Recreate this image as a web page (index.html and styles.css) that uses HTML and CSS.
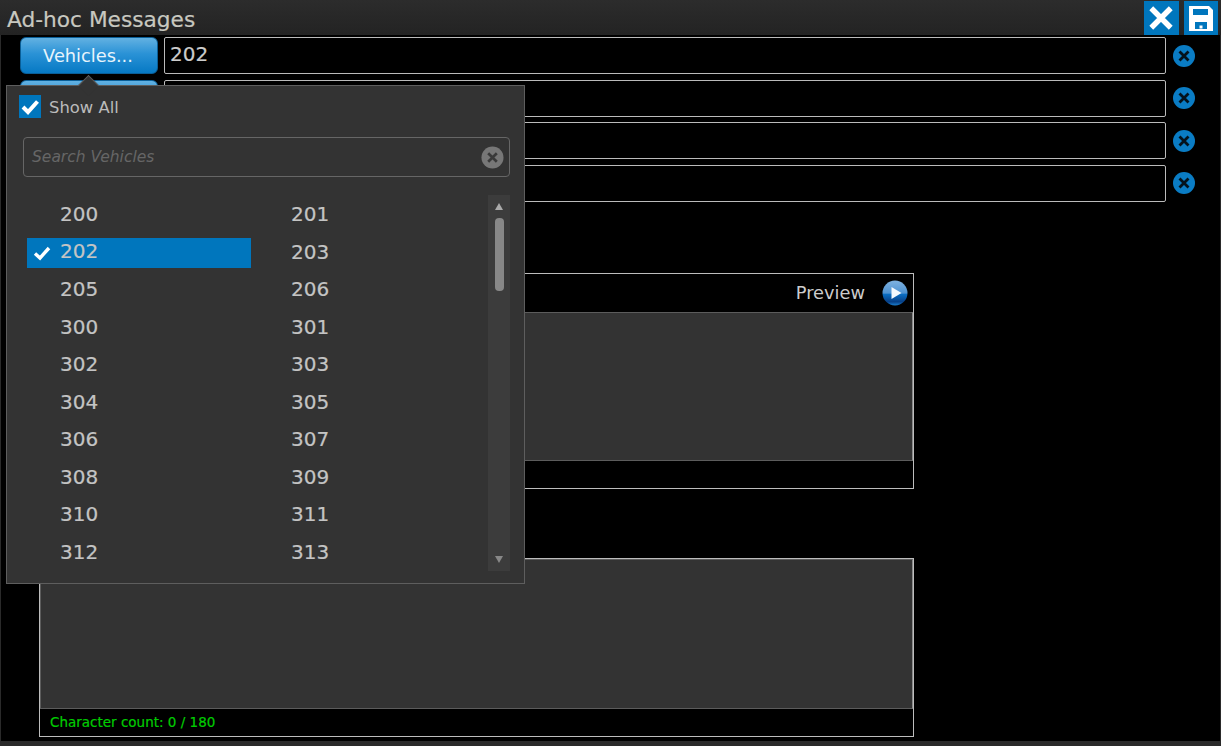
FILE: index.html
```html
<!DOCTYPE html>
<html lang="en">
<head>
<meta charset="utf-8">
<title>Ad-hoc Messages</title>
<link rel="stylesheet" href="styles.css">
</head>
<body>
<div class="window">
  <header class="titlebar">
    <h1 class="title">Ad-hoc Messages</h1>
    <div class="actions">
      <button class="action" aria-label="Close"><svg viewBox="0 0 24 24" width="26" height="26"><path d="M3 3 L21 21 M21 3 L3 21" stroke="#fff" stroke-width="5" fill="none"/></svg></button>
      <button class="action" aria-label="Save"><svg viewBox="0 0 24 25" width="24" height="25"><path fill="#fff" fill-rule="evenodd" d="M0 0 H20 L24 4 V25 H0 Z M4 3 V9 H19 V3 Z M6 16 V23 H18 V16 Z"/><rect x="10.5" y="19.5" width="3" height="3" fill="#fff"/></svg></button>
    </div>
  </header>
  <main class="content">
    <section class="rows">
      <div class="row"><button class="pick">Vehicles...</button><div class="field">202</div><span class="clear"><svg viewBox="0 0 24 24" width="24" height="24"><circle cx="12" cy="12" r="11" fill="#0a7cc4"/><path d="M7.5 7.5 L16.5 16.5 M16.5 7.5 L7.5 16.5" stroke="#04121c" stroke-width="2.8"/></svg></span></div>
      <div class="row"><button class="pick"></button><div class="field"></div><span class="clear"><svg viewBox="0 0 24 24" width="24" height="24"><circle cx="12" cy="12" r="11" fill="#0a7cc4"/><path d="M7.5 7.5 L16.5 16.5 M16.5 7.5 L7.5 16.5" stroke="#04121c" stroke-width="2.8"/></svg></span></div>
      <div class="row"><button class="pick"></button><div class="field"></div><span class="clear"><svg viewBox="0 0 24 24" width="24" height="24"><circle cx="12" cy="12" r="11" fill="#0a7cc4"/><path d="M7.5 7.5 L16.5 16.5 M16.5 7.5 L7.5 16.5" stroke="#04121c" stroke-width="2.8"/></svg></span></div>
      <div class="row"><button class="pick"></button><div class="field"></div><span class="clear"><svg viewBox="0 0 24 24" width="24" height="24"><circle cx="12" cy="12" r="11" fill="#0a7cc4"/><path d="M7.5 7.5 L16.5 16.5 M16.5 7.5 L7.5 16.5" stroke="#04121c" stroke-width="2.8"/></svg></span></div>
    </section>
    <section class="panel panel-first">
      <div class="panel-head">
        <span class="preview">Preview</span>
        <svg class="play" viewBox="0 0 26 26" width="26" height="26"><defs><linearGradient id="pg" x1="0" y1="0" x2="0" y2="1"><stop offset="0" stop-color="#7fb2e0"/><stop offset=".5" stop-color="#4f93d2"/><stop offset=".56" stop-color="#0a6cc0"/><stop offset=".85" stop-color="#073f86"/><stop offset="1" stop-color="#1a7fd0"/></linearGradient></defs><circle cx="13" cy="13" r="12.5" fill="url(#pg)"/><path d="M9.5 7 L19.5 13 L9.5 19 Z" fill="#f4f9fd"/></svg>
      </div>
      <div class="panel-body"></div>
      <div class="panel-foot"></div>
    </section>
    <section class="panel panel-second">
      <div class="panel-body"></div>
      <div class="panel-foot count">Character count: 0 / 180</div>
    </section>
  </main>

  <div class="popover">
    <label class="show-all"><span class="check"><svg viewBox="0 0 22 23" width="22" height="23"><path d="M4 12 L9 17 L18.5 6.5" stroke="#fff" stroke-width="4" fill="none"/></svg></span><span class="show-label">Show All</span></label>
    <div class="search"><span class="placeholder">Search Vehicles</span><svg viewBox="0 0 24 24" width="23" height="23"><circle cx="12" cy="12" r="11.5" fill="#777"/><path d="M7.5 7.5 L16.5 16.5 M16.5 7.5 L7.5 16.5" stroke="#3a3a3a" stroke-width="2.8"/></svg></div>
    <div class="listwrap">
      <ul class="list">
        <li>200</li><li>201</li>
        <li class="selected"><svg class="tick" viewBox="0 0 18 16" width="18" height="16"><path d="M2 8.5 L7 13 L16 3" stroke="#fff" stroke-width="3.4" fill="none"/></svg>202</li><li>203</li>
        <li>205</li><li>206</li>
        <li>300</li><li>301</li>
        <li>302</li><li>303</li>
        <li>304</li><li>305</li>
        <li>306</li><li>307</li>
        <li>308</li><li>309</li>
        <li>310</li><li>311</li>
        <li>312</li><li>313</li>
      </ul>
      <div class="scrollbar">
        <span class="arrow up"></span>
        <span class="thumb"></span>
        <span class="arrow down"></span>
      </div>
    </div>
  </div>
</div>
</body>
</html>
```

FILE: styles.css
```css
* { box-sizing: border-box; }
html, body { margin: 0; height: 100%; background: #000; overflow: hidden; }
body { font-family: "DejaVu Sans", Verdana, sans-serif; color: #ccc; }

.window {
  position: relative;
  width: 1221px;
  height: 746px;
  background: #000;
  border-left: 1px solid #2a2a2a;
  border-right: 1px solid #2a2a2a;
  border-bottom: 5px solid #2a2a2a;
  display: flex;
  flex-direction: column;
}

.titlebar {
  height: 35px;
  flex: none;
  background: linear-gradient(#2c2c2c, #232323);
  display: flex;
  justify-content: space-between;
  padding: 1px 3px 0 7px;
  margin: 0 -1px;
}
.title { margin: 0; font-size: 21.7px; font-weight: 400; line-height: 38px; color: #c8c8c0; -webkit-text-stroke: 0.2px #c8c8c0; }
.actions { display: flex; gap: 5px; }
.action {
  width: 34.5px; height: 34px; padding: 0; border: 0;
  background: #0076bd;
  display: flex; align-items: center; justify-content: center;
}

.content { flex: 1; display: flex; flex-direction: column; padding: 2px 0 0 19px; }

.rows { display: flex; flex-direction: column; gap: 5.67px; }
.row { display: flex; align-items: center; height: 37px; }
.pick {
  width: 138px; height: 37px; flex: none; padding: 0 2px 0 0;
  border: 1px solid #0a5f98; border-radius: 6px;
  background: linear-gradient(#62b1e2, #2a92d6 45%, #0679c4);
  color: #e8f4fc;
  font: 17.8px "DejaVu Sans", Verdana, sans-serif;
}
.field {
  width: 1002px; height: 37px; margin-left: 6px; flex: none;
  border: 1px solid #bbb; border-radius: 2px;
  background: #000; color: #ccc;
  font-size: 20px; line-height: 33px; padding-left: 5px;
  -webkit-text-stroke: 0.2px #ccc;
}
.clear { margin-left: 6px; display: flex; }

.panel { width: 875px; margin-left: 19px; border: 1px solid #bdbdbd; display: flex; flex-direction: column; flex: none; }
.panel-first { margin-top: 71px; height: 216px; }
.panel-second { margin-top: 69px; height: 179px; }
.panel-head { height: 38px; flex: none; display: flex; justify-content: flex-end; align-items: center; gap: 17px; padding-right: 5px; }
.preview { font-size: 17.8px; color: #ccc; }
.panel-body { flex: 1; background: #333; border: 1px solid #5c5c5c; border-right-color: #888; }
.panel-foot { height: 27px; flex: none; }
.count { color: #0c0; font-size: 13.5px; line-height: 26px; padding-left: 10px; -webkit-text-stroke: 0.2px #0c0; }

.popover {
  position: absolute;
  left: 5px; top: 85px;
  width: 519px; height: 499px;
  background: #333;
  border: 1px solid #5e5e5e;
  padding: 9px 14px 0 12px;
}
.popover::before {
  content: "";
  position: absolute;
  left: 74px; top: -8px;
  width: 14px; height: 14px;
  background: #333;
  border-left: 1px solid #5e5e5e;
  border-top: 1px solid #5e5e5e;
  transform: rotate(45deg);
}
.show-all { position: relative; display: flex; align-items: flex-start; gap: 8px; font-size: 16.4px; color: #bbb; height: 23px; }
.show-label { line-height: 25px; }
.check { width: 22px; height: 23px; background: #0076bd; display: block; }
.search {
  margin: 19px 0 0 4px; height: 40px;
  border: 1px solid #666; border-radius: 4px;
  display: flex; align-items: center; justify-content: space-between;
  padding: 0 5px 0 8px;
}
.placeholder { font-style: italic; font-size: 15.5px; color: #666; }

.listwrap { display: flex; margin-top: 19px; }
.list {
  list-style: none; margin: 0; padding: 0 0 0 8px;
  width: 469px; height: 375px;
  display: grid;
  grid-template-columns: 224px 1fr;
  column-gap: 8px;
  grid-auto-rows: 37.5px;
  align-content: start;
  font-size: 20px;
  color: #c4c4c4;
  -webkit-text-stroke: 0.2px #c4c4c4;
}
.list li { position: relative; height: 30px; padding-left: 33px; line-height: 37px; }
.list li:nth-child(even) { padding-left: 32px; }
.list li.selected { background: #0076bd; margin-top: 4px; line-height: 27px; }
.tick { position: absolute; left: 6px; top: 7px; }

.scrollbar {
  width: 22px; height: 376px; margin-top: -1px; flex: none;
  background: #3c3c3c;
  position: relative;
  display: flex;
  justify-content: center;
}
.arrow { position: absolute; width: 0; height: 0; border-left: 4px solid transparent; border-right: 4px solid transparent; }
.arrow.up { top: 8px; border-bottom: 7px solid #aaa; }
.arrow.down { bottom: 8px; border-top: 7px solid #888; }
.thumb { position: absolute; top: 23px; width: 9px; height: 73px; border-radius: 4px; background: #888; }
```
